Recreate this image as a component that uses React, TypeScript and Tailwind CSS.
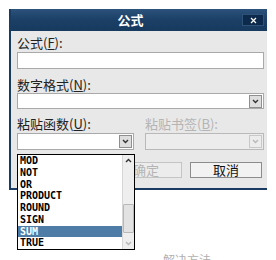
import React from "react";

const cjk = { fontFamily: '"Noto Sans CJK SC", "Noto Sans", sans-serif' };
const mono = { fontFamily: '"DejaVu Sans Mono", "Liberation Mono", monospace' };

function Chevron({ light = false }: { light?: boolean }) {
  return (
    <svg width="7" height="5" viewBox="0 0 7 5">
      <path d="M1 1 L3.5 3.5 L6 1" fill="none" stroke={light ? "#b8b8b8" : "#333"} strokeWidth="1.4" />
    </svg>
  );
}

function DropBtn({ light = false }: { light?: boolean }) {
  return (
    <div className={`w-[13px] h-[13px] flex items-center justify-center border ${light ? "border-[#c8c8c8] bg-[#ececec]" : "border-[#8f8f8f] bg-[#dedede]"}`}>
      <Chevron light={light} />
    </div>
  );
}

const items = ["MOD", "NOT", "OR", "PRODUCT", "ROUND", "SIGN", "SUM", "TRUE"];

export default function App() {
  return (
    <div className="w-[276px] h-[260px] bg-white overflow-hidden pt-[9px] pl-[9px]" style={cjk}>
      <div className="w-[258px] border-l-2 border-b-2 border-[#1b3c62] bg-[#e8e8e8]">
        {/* title bar */}
        <div className="h-[22px] flex items-center bg-gradient-to-b from-[#2c537c] via-[#1b3f66] to-[#173a5f]">
          <div className="flex-1 text-center text-white font-bold text-[13px] leading-[22px] pl-[8px]">公式</div>
          <div className="w-[22px] h-[12px] mr-[3px] bg-[#0d2a4c] border border-[#2f5279] flex items-center justify-center">
            <svg width="7" height="7" viewBox="0 0 7 7">
              <path d="M1 1 L6 6 M6 1 L1 6" stroke="#fff" strokeWidth="1.2" />
            </svg>
          </div>
        </div>
        {/* body */}
        <div className="pl-[6px] pr-[3px] pt-[3px] pb-[10px] text-[13px] text-[#222]">
          <div className="h-[17px] leading-[17px]">
            公式(<span className="underline">F</span>):
          </div>
          <div className="mt-[1px] h-[17px] bg-white border border-[#a9a9a9]" />

          <div className="mt-[8px] h-[16px] leading-[16px]">
            数字格式(<span className="underline">N</span>):
          </div>
          <div className="h-[16px] bg-white border border-[#a9a9a9] flex items-center justify-end pr-[1px]">
            <DropBtn />
          </div>

          <div className="mt-[7px] flex">
            <div className="w-[117px]">
              <div className="h-[16px] leading-[16px]">
                粘贴函数(<span className="underline">U</span>):
              </div>
              <div className="relative mt-[1px] h-[17px] bg-white border border-[#a9a9a9] flex items-center justify-end pr-[1px]">
                <DropBtn />
                {/* dropdown list */}
                <div className="absolute left-[-1px] top-[20px] w-[118px] h-[96px] bg-white border border-black flex z-10">
                  <div className="flex-1 flex flex-col">
                    {items.map((it) => (
                      <div
                        key={it}
                        className={`h-[11.75px] leading-[11.75px] pl-[2px] font-bold text-[10px] ${it === "SUM" ? "bg-[#4d7ca6] text-white" : "text-black"}`}
                        style={mono}
                      >
                        {it}
                      </div>
                    ))}
                  </div>
                  <div className="w-[12px] bg-[#eeeeee] border-l border-[#d6d6d6] flex flex-col items-center">
                    <div className="h-[12px] flex items-center justify-center rotate-180">
                      <Chevron />
                    </div>
                    <div className="h-[37px]" />
                    <div className="w-[11px] h-[29px] bg-[#e2e2e2] border border-[#b8b8b8] rounded-[1px]" />
                    <div className="flex-1" />
                    <div className="h-[12px] flex items-center justify-center">
                      <Chevron light />
                    </div>
                  </div>
                </div>
              </div>
            </div>
            <div className="ml-[11px] w-[119px]">
              <div className="h-[16px] leading-[16px] text-[#b4b4b4]">
                粘贴书签(<span className="underline">B</span>):
              </div>
              <div className="mt-[1px] h-[17px] bg-[#ececec] border border-[#b9b9b9] flex items-center justify-end pr-[1px]">
                <DropBtn light />
              </div>
            </div>
          </div>

          <div className="mt-[12px] flex justify-end pr-[2px] gap-[8px]">
            <div className="w-[72px] h-[16px] border border-[#c4c4c4] bg-[#ececec] text-[#b4b4b4] text-[13px] leading-[14px] text-center">
              确定
            </div>
            <div className="w-[72px] h-[16px] border border-[#8c8c8c] bg-[#f2f2f2] text-[#111] text-[13px] leading-[14px] text-center">
              取消
            </div>
          </div>
        </div>
      </div>
      <div className="mt-[63px] pl-[154px] text-[12px] leading-[14px] text-[#b0b0b0]">解决方法</div>
    </div>
  );
}
